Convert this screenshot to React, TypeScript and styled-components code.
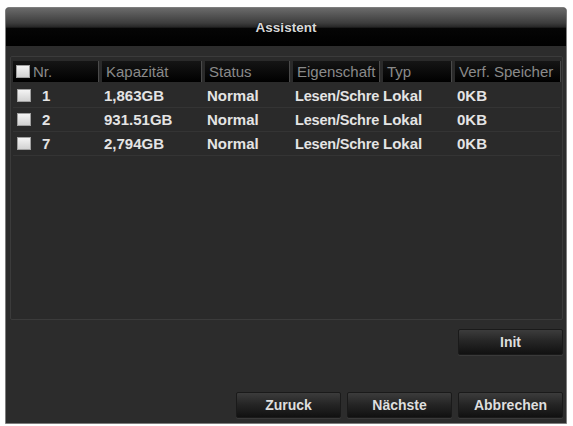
import styled, { createGlobalStyle } from 'styled-components';

const GlobalStyle = createGlobalStyle`
  html, body {
    margin: 0;
    padding: 0;
    background: #ffffff;
  }
  * {
    box-sizing: border-box;
  }
`;

const COLUMNS = '86px 100px 85px 87px 69px 106px';

const Page = styled.div`
  width: 573px;
  height: 426px;
  padding: 7px 6px 2px 5px;
  font-family: 'Liberation Sans', Arial, sans-serif;
`;

const Dialog = styled.div`
  width: 100%;
  height: 100%;
  display: flex;
  flex-direction: column;
  background: #2c2c2c;
  border: 1px solid #7d7d7d;
  border-radius: 4px 4px 0 0;
  overflow: hidden;
`;

const TitleBar = styled.div`
  height: 38px;
  flex-shrink: 0;
  display: flex;
  align-items: center;
  justify-content: center;
  background: linear-gradient(
    to bottom,
    #6a6a6a 0%,
    #3c3c3c 40%,
    #262626 50%,
    #050505 54%,
    #000000 100%
  );
  color: #d8d8d8;
  font-size: 13.5px;
  font-weight: bold;
  text-shadow: 0 0 2px rgba(0, 0, 0, 0.8);
`;

const Body = styled.div`
  flex: 1;
  display: flex;
  flex-direction: column;
  padding: 10px 3px 5px 4px;
`;

const TablePanel = styled.div`
  height: 264px;
  display: flex;
  flex-direction: column;
  padding: 4px 2px;
  background: #2a2a2a;
  border: 1px solid #3b3b3b;
  border-radius: 2px;
`;

const HeaderRow = styled.div`
  display: grid;
  grid-template-columns: ${COLUMNS};
  column-gap: 3px;
  height: 21px;
  margin-bottom: 2px;
`;

const HeaderCell = styled.div<{ $first?: boolean }>`
  display: flex;
  align-items: center;
  gap: 3px;
  padding-left: ${({ $first }) => ($first ? '3px' : '4px')};
  background: linear-gradient(to bottom, #151515, #000000);
  border-right: 1px solid #4a4a4a;
  color: #8a8a8a;
  font-size: 15px;
  white-space: nowrap;
  overflow: hidden;
`;

const Row = styled.div`
  display: grid;
  grid-template-columns: ${COLUMNS};
  column-gap: 3px;
  height: 24px;
  border-bottom: 1px solid #343434;
`;

const Cell = styled.div<{ $flush?: boolean; $tight?: boolean }>`
  display: flex;
  align-items: center;
  padding-left: ${({ $flush }) => ($flush ? '0' : '2px')};
  color: #e4e4e4;
  font-size: ${({ $tight }) => ($tight ? '14.5px' : '15px')};
  letter-spacing: ${({ $tight }) => ($tight ? '-0.2px' : '0')};
  font-weight: bold;
  white-space: nowrap;
  overflow: hidden;
`;

const NrCell = styled(Cell)`
  padding-left: 4px;
  gap: 11px;
`;

const Check = styled.span`
  display: inline-block;
  flex-shrink: 0;
  width: 14px;
  height: 13px;
  background: linear-gradient(to bottom, #f4f4f4, #d2d2d2);
  border: 1px solid #a0a0a0;
`;

const InitRow = styled.div`
  display: flex;
  justify-content: flex-end;
  margin-top: 9px;
`;

const Footer = styled.div`
  display: flex;
  justify-content: flex-end;
  gap: 6px;
  margin-top: auto;
`;

const Button = styled.button`
  width: 105px;
  height: 26px;
  padding: 0;
  background: linear-gradient(to bottom, #3c3c3c 0%, #262626 45%, #111111 100%);
  border: 1px solid #1a1a1a;
  border-radius: 2px;
  box-shadow: 0 1px 0 #3a3a3a;
  color: #dedede;
  font-family: 'Liberation Sans', Arial, sans-serif;
  font-size: 14px;
  font-weight: bold;
`;

const disks = [
  { nr: '1', cap: '1,863GB' },
  { nr: '2', cap: '931.51GB' },
  { nr: '7', cap: '2,794GB' },
];

const App = () => {
  return (
    <>
      <GlobalStyle />
      <Page>
        <Dialog>
          <TitleBar>Assistent</TitleBar>
          <Body>
            <TablePanel>
              <HeaderRow>
                <HeaderCell $first>
                  <Check />
                  Nr.
                </HeaderCell>
                <HeaderCell>Kapazität</HeaderCell>
                <HeaderCell>Status</HeaderCell>
                <HeaderCell>Eigenschaft</HeaderCell>
                <HeaderCell>Typ</HeaderCell>
                <HeaderCell>Verf. Speicher</HeaderCell>
              </HeaderRow>
              {disks.map((d) => (
                <Row key={d.nr}>
                  <NrCell>
                    <Check />
                    {d.nr}
                  </NrCell>
                  <Cell>{d.cap}</Cell>
                  <Cell>Normal</Cell>
                  <Cell $tight>Lesen/Schre</Cell>
                  <Cell $flush>Lokal</Cell>
                  <Cell>0KB</Cell>
                </Row>
              ))}
            </TablePanel>
            <InitRow>
              <Button>Init</Button>
            </InitRow>
            <Footer>
              <Button>Zuruck</Button>
              <Button>Nächste</Button>
              <Button>Abbrechen</Button>
            </Footer>
          </Body>
        </Dialog>
      </Page>
    </>
  );
};

export default App;
